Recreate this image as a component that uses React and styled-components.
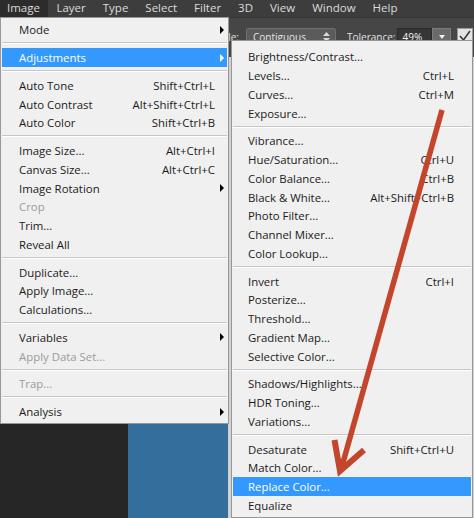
import React from 'react';
import styled, { createGlobalStyle } from 'styled-components';

const GlobalStyle = createGlobalStyle`
    html, body {
        margin: 0;
        padding: 0;
        overflow: hidden;
        background: #272727;
    }
    * {
        box-sizing: border-box;
    }
`;

const FONT = `'Open Sans', 'Noto Sans', sans-serif`;

const barItems = ['Image', 'Layer', 'Type', 'Select', 'Filter', '3D', 'View', 'Window', 'Help'];

const imageMenu = [
    { label: 'Mode', sub: true },
    { sep: true },
    { label: 'Adjustments', sub: true, active: true },
    { sep: true },
    { label: 'Auto Tone', keys: 'Shift+Ctrl+L' },
    { label: 'Auto Contrast', keys: 'Alt+Shift+Ctrl+L' },
    { label: 'Auto Color', keys: 'Shift+Ctrl+B' },
    { sep: true },
    { label: 'Image Size...', keys: 'Alt+Ctrl+I' },
    { label: 'Canvas Size...', keys: 'Alt+Ctrl+C' },
    { label: 'Image Rotation', sub: true },
    { label: 'Crop', disabled: true },
    { label: 'Trim...' },
    { label: 'Reveal All' },
    { sep: true },
    { label: 'Duplicate...' },
    { label: 'Apply Image...' },
    { label: 'Calculations...' },
    { sep: true },
    { label: 'Variables', sub: true },
    { label: 'Apply Data Set...', disabled: true },
    { sep: true },
    { label: 'Trap...', disabled: true },
    { sep: true },
    { label: 'Analysis', sub: true },
];

const adjustMenu = [
    { label: 'Brightness/Contrast...' },
    { label: 'Levels...', keys: 'Ctrl+L' },
    { label: 'Curves...', keys: 'Ctrl+M' },
    { label: 'Exposure...' },
    { sep: true },
    { label: 'Vibrance...' },
    { label: 'Hue/Saturation...', keys: 'Ctrl+U' },
    { label: 'Color Balance...', keys: 'Ctrl+B' },
    { label: 'Black & White...', keys: 'Alt+Shift+Ctrl+B' },
    { label: 'Photo Filter...' },
    { label: 'Channel Mixer...' },
    { label: 'Color Lookup...' },
    { sep: true },
    { label: 'Invert', keys: 'Ctrl+I' },
    { label: 'Posterize...' },
    { label: 'Threshold...' },
    { label: 'Gradient Map...' },
    { label: 'Selective Color...' },
    { sep: true },
    { label: 'Shadows/Highlights...' },
    { label: 'HDR Toning...' },
    { label: 'Variations...' },
    { sep: true },
    { label: 'Desaturate', keys: 'Shift+Ctrl+U' },
    { label: 'Match Color...' },
    { label: 'Replace Color...', active: true },
    { label: 'Equalize' },
];

function App() {
    return (
        <>
            <GlobalStyle />
            <Page>
                <MenuBar>
                    {barItems.map((name, i) => (
                        <BarItem key={name} $open={i === 0}>
                            {name}
                        </BarItem>
                    ))}
                </MenuBar>
                <OptionsBar>
                    <OptLabel $width={239}>Sample:</OptLabel>
                    <Select>
                        Contiguous
                        <svg width="7" height="10" viewBox="0 0 7 10">
                            <path d="M3.5 0 L7 4 H0 Z M0 6 H7 L3.5 10 Z" fill="#d8d8d8" />
                        </svg>
                    </Select>
                    <OptLabel $gap={11}>Tolerance:</OptLabel>
                    <NumberField>49%</NumberField>
                    <SpinButton>
                        <svg width="6" height="4" viewBox="0 0 6 4">
                            <path d="M0 0 H6 L3 4 Z" fill="#f0f0f0" />
                        </svg>
                    </SpinButton>
                    <CheckBox>
                        <svg width="14" height="14" viewBox="0 0 14 14">
                            <path d="M2 7 L5.5 11 L12 2" fill="none" stroke="#3a3a3a" strokeWidth="1.6" />
                        </svg>
                    </CheckBox>
                </OptionsBar>
                <Workspace>
                    <Pasteboard />
                    <DocArea />
                    <DocRest />
                </Workspace>

                <DropMenu $left={0} $top={17} $width={229} $padTop={2.5}>
                    {imageMenu.map((it, i) =>
                        it.sep ? <Sep key={i} /> : <MenuRow key={i} item={it} padRight={0} />
                    )}
                </DropMenu>

                <DropMenu $left={231} $top={40} $width={242} $padTop={6.6}>
                    {adjustMenu.map((it, i) =>
                        it.sep ? <Sep key={i} /> : <MenuRow key={i} item={it} padRight={5} padLeft={15} />
                    )}
                </DropMenu>

                <ArrowLayer width="474" height="518" viewBox="0 0 474 518">
                    <path d="M442 110 L341.5 468" stroke="#c3452c" strokeWidth="5.5" fill="none" />
                    <path
                        d="M334.5 440 L340 471 L364 450"
                        stroke="#c3452c"
                        strokeWidth="6"
                        fill="none"
                        strokeLinejoin="miter"
                    />
                </ArrowLayer>
            </Page>
        </>
    );
}

function MenuRow({ item, padRight, padLeft = 17 }) {
    return (
        <Row $active={item.active} $disabled={item.disabled} $padRight={padRight} $padLeft={padLeft}>
            <span>{item.label}</span>
            <Keys>{item.keys}</Keys>
            <ArrowCell>{item.sub && <SubArrow $active={item.active} />}</ArrowCell>
        </Row>
    );
}

const Page = styled.div`
    position: relative;
    width: 474px;
    height: 518px;
    overflow: hidden;
    display: flex;
    flex-direction: column;
    font-family: ${FONT};
    font-size: 11.4px;
    background: #272727;
`;

const MenuBar = styled.div`
    height: 17px;
    display: flex;
    background: #3d3d3d;
    font-size: 11.5px;
`;

const BarItem = styled.div`
    flex-shrink: 0;
    padding: ${(p) => (p.$open ? '0 8px 0 7px' : '0 8.5px')};
    line-height: 16px;
    color: #dcdcdc;
    background: ${(p) => (p.$open ? '#2c2c2c' : 'transparent')};
    white-space: nowrap;
`;

const OptionsBar = styled.div`
    height: 40px;
    display: flex;
    align-items: flex-start;
    padding-top: 10px;
    background: #464646;
    border-top: 1px solid #353535;
    color: #e2e2e2;
    font-size: 10px;
    & > * {
        flex-shrink: 0;
    }
`;

const OptLabel = styled.div`
    width: ${(p) => (p.$width ? `${p.$width}px` : 'auto')};
    margin-left: ${(p) => p.$gap || 0}px;
    text-align: right;
    line-height: 18px;
    white-space: nowrap;
`;

const Select = styled.div`
    margin-left: 7px;
    width: 90px;
    height: 18px;
    padding: 0 5px 0 6px;
    display: flex;
    align-items: center;
    justify-content: space-between;
    background: #5b5b5b;
    border: 1px solid #6e6e6e;
    border-radius: 2px;
    color: #e6e6e6;
`;

const NumberField = styled.div`
    margin-left: 2px;
    width: 35px;
    height: 18px;
    padding-left: 4px;
    line-height: 17px;
    background: #363636;
    border: 1px solid #2a2a2a;
    color: #f4f4f4;
`;

const SpinButton = styled.div`
    width: 19px;
    height: 18px;
    display: flex;
    align-items: center;
    justify-content: center;
    background: #6a6a6a;
    border: 1px solid #7c7c7c;
`;

const CheckBox = styled.div`
    margin-left: 6px;
    width: 16px;
    height: 16px;
    display: flex;
    align-items: center;
    justify-content: center;
    background: #e4e4e4;
    border: 1px solid #9a9a9a;
`;

const Workspace = styled.div`
    flex: 1;
    display: flex;
`;

const Pasteboard = styled.div`
    width: 128px;
    background: #262626;
`;

const DocArea = styled.div`
    width: 100px;
    background: #346e9c;
`;

const DocRest = styled.div`
    flex: 1;
    background: #d2d2d2;
`;

const DropMenu = styled.div`
    position: absolute;
    left: ${(p) => p.$left}px;
    top: ${(p) => p.$top}px;
    width: ${(p) => p.$width}px;
    padding: ${(p) => p.$padTop}px 1px 2px;
    background: #f0f0f0;
    border: 1px solid #979797;
    display: flex;
    flex-direction: column;
`;

const Row = styled.div`
    height: 18.75px;
    display: grid;
    grid-template-columns: 1fr auto 12px;
    align-items: center;
    padding-left: ${(p) => p.$padLeft}px;
    padding-right: ${(p) => p.$padRight}px;
    white-space: nowrap;
    color: ${(p) => (p.$active ? '#ffffff' : p.$disabled ? '#9b9b9b' : '#1a1a1a')};
    background: ${(p) => (p.$active ? '#3399ff' : 'transparent')};
`;

const Keys = styled.span`
    text-align: right;
`;

const ArrowCell = styled.span`
    display: flex;
    justify-content: flex-end;
    padding-right: 3px;
`;

const SubArrow = styled.span`
    width: 0;
    height: 0;
    border-top: 4px solid transparent;
    border-bottom: 4px solid transparent;
    border-left: 4px solid ${(p) => (p.$active ? '#ffffff' : '#000000')};
`;

const Sep = styled.div`
    height: 9px;
    padding-top: 3px;
    &::after {
        content: '';
        display: block;
        border-top: 1px solid #c6c6c6;
        border-bottom: 1px solid #ffffff;
    }
`;

const ArrowLayer = styled.svg`
    position: absolute;
    left: 0;
    top: 0;
    pointer-events: none;
`;

export default App;
